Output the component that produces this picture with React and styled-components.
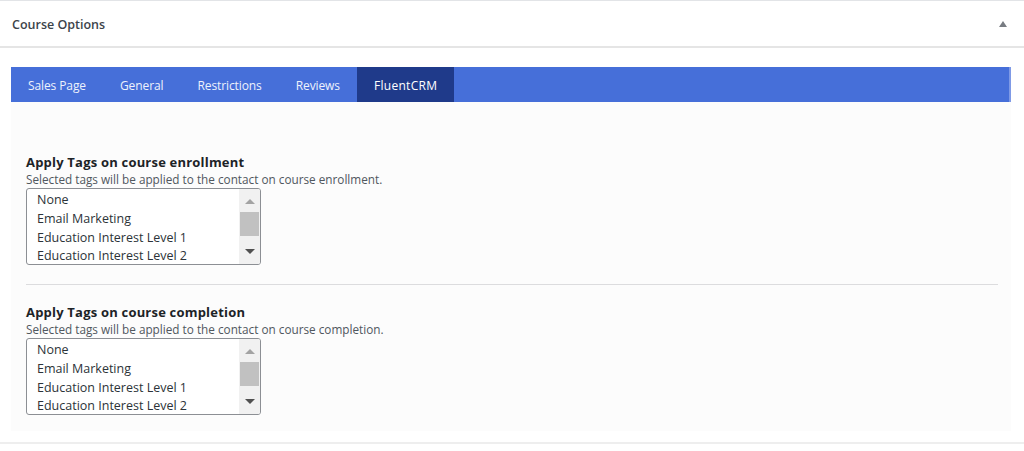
import styled, { createGlobalStyle } from "styled-components"

const Global = createGlobalStyle`
  body{
    margin: 0;
    background: #ffffff;
    font-family: "Open Sans", "Noto Sans", sans-serif;
  }
`

const Box = styled.div`
  width: 1024px;
  height: 451px;
  box-sizing: border-box;
  border-top: 1px solid #e2e4e7;
  background: #fff;
`

const Header = styled.div`
  display: flex;
  align-items: center;
  justify-content: space-between;
  padding: 2px 17px 0 12px;
  box-sizing: border-box;
  border-bottom: 2px solid #e5e5e5;
  height: 47px;
  & h2{
    margin: 0;
    font-size: 12.5px;
    font-weight: 600;
    color: #3c434a;
  }
`

const Toggle = styled.span`
  width: 0;
  height: 0;
  margin-bottom: 2px;
  border-left: 4px solid transparent;
  border-right: 4px solid transparent;
  border-bottom: 6px solid #787c82;
`

const Inside = styled.div`
  padding: 19px 13px 11px 11px;
  border-bottom: 2px solid #eeeeee;
`

const TabBar = styled.div`
  display: flex;
  height: 35px;
  background: #466fd9;
  border-right: 2px solid #7f9ae6;
`

const Tab = styled.div`
  display: flex;
  align-items: center;
  padding: 1px 17px 0;
  font-size: 12px;
  letter-spacing: ${p => p.active ? "0.3px" : "-0.1px"};
  color: ${p => p.active ? "#ffffff" : "#eef2fc"};
  background: ${p => p.active ? "#1f3a8a" : "transparent"};
`

const Panel = styled.div`
  background: #fcfcfc;
  padding: 52px 13px 16px 15px;
`

const Section = styled.div`
  padding-bottom: ${p => p.last ? "0" : "19px"};
  border-bottom: ${p => p.last ? "none" : "1px solid #dcdcde"};
  margin-bottom: ${p => p.last ? "0" : "19px"};
`

const Title = styled.div`
  font-size: 13px;
  font-weight: 700;
  color: #1d2327;
  line-height: 17px;
  letter-spacing: 0.2px;
`

const Hint = styled.div`
  font-size: 11.75px;
  color: #50575e;
  line-height: 17px;
`

const ListBox = styled.div`
  display: flex;
  width: 235px;
  height: 77px;
  box-sizing: border-box;
  border: 1px solid #8c8f94;
  border-radius: 3px;
  background: #fff;
  overflow: hidden;
`

const Options = styled.div`
  flex: 1;
  padding: 2px 0 0 10px;
`

const Option = styled.div`
  font-size: 12.5px;
  line-height: 18.8px;
  color: #2c3338;
  white-space: nowrap;
`

const Scroll = styled.div`
  width: 21px;
  background: #f1f1f1;
  display: flex;
  flex-direction: column;
  align-items: center;
  padding: 10px 0 0;
  box-sizing: border-box;
`

const Arrow = styled.span`
  width: 0;
  height: 0;
  border-left: 5px solid transparent;
  border-right: 5px solid transparent;
  ${p => p.down
    ? "border-top: 5px solid #505050; margin-top: 13px;"
    : "border-bottom: 5px solid #a3a3a3;"}
`

const Thumb = styled.div`
  width: 19px;
  height: 24px;
  margin-top: 8px;
  background: #c1c1c1;
`

const tabs = ["Sales Page", "General", "Restrictions", "Reviews", "FluentCRM"]
const tags = ["None", "Email Marketing", "Education Interest Level 1", "Education Interest Level 2"]

function TagSelect(){
  return(
    <ListBox>
      <Options>
        {tags.map(t => <Option key={t}>{t}</Option>)}
      </Options>
      <Scroll>
        <Arrow />
        <Thumb />
        <Arrow down />
      </Scroll>
    </ListBox>
  )
}

export default function App(){
  return(
    <Box>
      <Global />
      <Header>
        <h2>Course Options</h2>
        <Toggle />
      </Header>
      <Inside>
        <TabBar>
          {tabs.map(t => <Tab key={t} active={t === "FluentCRM"}>{t}</Tab>)}
        </TabBar>
        <Panel>
          <Section>
            <Title>Apply Tags on course enrollment</Title>
            <Hint>Selected tags will be applied to the contact on course enrollment.</Hint>
            <TagSelect />
          </Section>
          <Section last>
            <Title>Apply Tags on course completion</Title>
            <Hint>Selected tags will be applied to the contact on course completion.</Hint>
            <TagSelect />
          </Section>
        </Panel>
      </Inside>
    </Box>
  )
}
